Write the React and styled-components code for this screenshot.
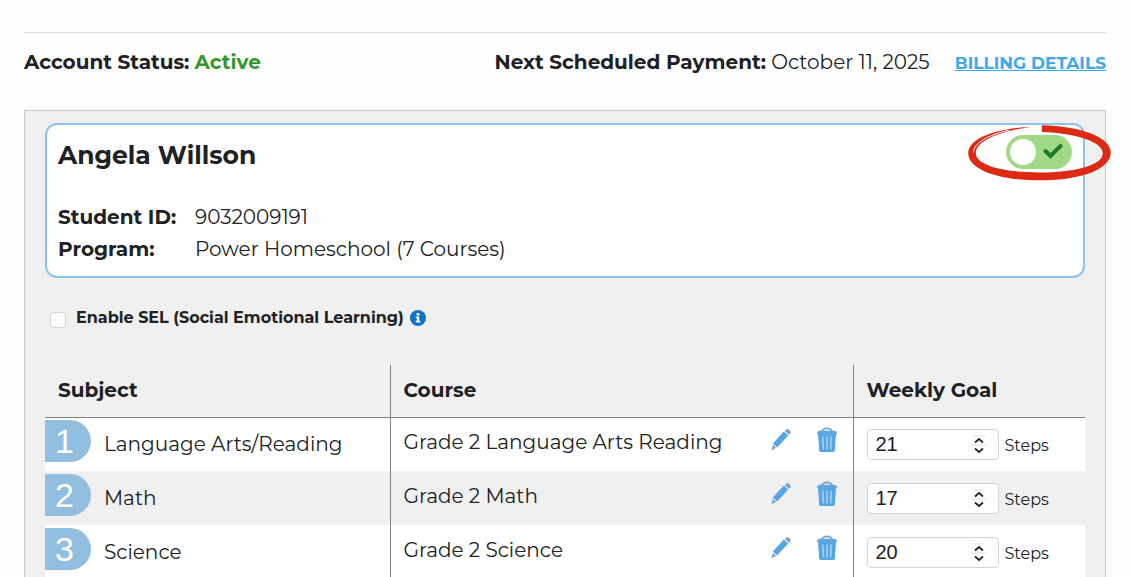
import React, { useState } from "react";
import styled, { createGlobalStyle } from "styled-components";

const courses = [
  { id: 1, subject: "Language Arts/Reading", course: "Grade 2 Language Arts Reading", goal: 21 },
  { id: 2, subject: "Math", course: "Grade 2 Math", goal: 17 },
  { id: 3, subject: "Science", course: "Grade 2 Science", goal: 20 },
];

const PencilIcon = () => (
  <svg width="22" height="24" viewBox="0 0 22 24" aria-hidden="true">
    <path d="M1.5 22.5 2.8 16.4 6.2 19.8Z" fill="#7ea6c4" />
    <path d="M2.8 15.4 13.8 3.6 18.2 7.6 7.2 19.4Z" fill="#52a7e4" />
    <path d="M14.6 3 16.4 1.4Q17.6.6 18.6 1.4L20.4 3Q21.2 4 20.4 5.2L19 6.8Z" fill="#7ea6c4" />
  </svg>
);

const TrashIcon = () => (
  <svg width="22" height="26" viewBox="0 0 22 26" aria-hidden="true">
    <path d="M6 4.4Q7 1.4 11 1.4T16 4.4" fill="none" stroke="#6fa6cf" strokeWidth="1.8" />
    <path d="M1 7Q1 3.8 4 3.8H18Q21 3.8 21 7Z" fill="#64a6d8" />
    <path d="M2 7H20L18.8 23.4Q18.6 25 17.2 25H4.8Q3.4 25 3.2 23.4Z" fill="#52a7e4" />
    <path d="M6.8 9.5 7.4 22.5M11 9.5V22.5M15.2 9.5 14.6 22.5" stroke="#a9d0ec" strokeWidth="1.6" />
  </svg>
);

const InfoIcon = () => (
  <svg width="16" height="16" viewBox="0 0 16 16" aria-hidden="true">
    <circle cx="8" cy="8" r="8" fill="#1273c4" />
    <circle cx="8" cy="4.2" r="1.5" fill="#fff" />
    <path d="M5.8 6.6H9.2V10.8H10.4V12.4H5.8V10.8H7V8.2H5.8Z" fill="#fff" />
  </svg>
);

const CircleMark = () => (
  <Mark viewBox="80 58 436 172" aria-hidden="true">
    <path
      d="M305 62C420 64 513 98 513 144C513 192 430 228 298 228C175 228 83 195 83 146C83 105 155 72 275 66C180 80 106 108 106 146C106 182 190 204 298 204C400 204 489 184 489 146C489 112 410 86 305 82Z"
      fill="#dc2a14"
    />
    <path d="M99 144C99 116 140 92 205 77" fill="none" stroke="#fff" strokeWidth="3" />
  </Mark>
);

export default function App() {
  const [active, setActive] = useState(true);
  const [sel, setSel] = useState(false);

  return (
    <>
      <GlobalStyle />
      <Page>
        <StatusBar>
          <div>
            <strong>Account Status:</strong> <Active>Active</Active>
          </div>
          <Payment>
            <span>
              <strong>Next Scheduled Payment:</strong> October 11, 2025
            </span>
            <BillingLink href="#billing">BILLING DETAILS</BillingLink>
          </Payment>
        </StatusBar>
        <Panel>
          <StudentCard>
            <CardHeader>
              <Name>Angela Willson</Name>
              <Toggle>
                <ToggleInput
                  type="checkbox"
                  aria-label="Student active"
                  checked={active}
                  onChange={(e) => setActive(e.target.checked)}
                />
                <Check viewBox="0 0 20 16" aria-hidden="true">
                  <path
                    d="M2.5 8 7.5 13 17.5 3"
                    fill="none"
                    stroke="#1d7a2c"
                    strokeWidth="4"
                    strokeLinecap="round"
                  />
                </Check>
                <CircleMark />
              </Toggle>
            </CardHeader>
            <Details>
              <dt>Student ID:</dt>
              <dd>9032009191</dd>
              <dt>Program:</dt>
              <dd>Power Homeschool (7 Courses)</dd>
            </Details>
          </StudentCard>
          <SelRow>
            <SelCheckbox
              id="sel"
              type="checkbox"
              checked={sel}
              onChange={(e) => setSel(e.target.checked)}
            />
            <label htmlFor="sel">Enable SEL (Social Emotional Learning)</label>
            <InfoButton type="button" aria-label="About SEL">
              <InfoIcon />
            </InfoButton>
          </SelRow>
          <Table>
            <thead>
              <tr>
                <SubjectHead>Subject</SubjectHead>
                <Head>Course</Head>
                <GoalHead>Weekly Goal</GoalHead>
              </tr>
            </thead>
            <tbody>
              {courses.map(({ id, subject, course, goal }) => (
                <Row key={`course-${id}`}>
                  <Cell>
                    <Subject>
                      <Badge>{id}</Badge>
                      <span>{subject}</span>
                    </Subject>
                  </Cell>
                  <Cell>
                    <Course>
                      <CourseName>{course}</CourseName>
                      <IconButton type="button" aria-label={`Edit ${course}`}>
                        <PencilIcon />
                      </IconButton>
                      <IconButton type="button" aria-label={`Delete ${course}`}>
                        <TrashIcon />
                      </IconButton>
                    </Course>
                  </Cell>
                  <Cell>
                    <Goal>
                      <GoalField>
                        <GoalInput id={`goal-${id}`} type="number" defaultValue={goal} />
                        <Stepper viewBox="0 0 16 20" aria-hidden="true">
                          <path d="M0 10H16M2 1H14" stroke="#ddd" />
                          <path
                            d="M4 7.5 8 4 12 7.5M4 13.5 8 17 12 13.5"
                            fill="none"
                            stroke="#222"
                            strokeWidth="1.7"
                          />
                        </Stepper>
                      </GoalField>
                      <GoalUnit htmlFor={`goal-${id}`}>Steps</GoalUnit>
                    </Goal>
                  </Cell>
                </Row>
              ))}
            </tbody>
          </Table>
        </Panel>
      </Page>
    </>
  );
}

const GlobalStyle = createGlobalStyle`
  * {
    box-sizing: border-box;
  }

  body {
    margin: 0;
    background: #fefefe;
    color: #202124;
    font-family: Montserrat, Inter, sans-serif;
    font-size: 20px;
    line-height: 24px;
  }
`;

const Page = styled.main`
  padding: 32px 24px 0;
`;

const StatusBar = styled.div`
  display: flex;
  justify-content: space-between;
  height: 78px;
  padding-top: 17px;
  border-top: 1px solid #dcdcdc;
  white-space: nowrap;
`;

const Active = styled.strong`
  color: #35972a;
`;

const Payment = styled.div`
  display: flex;
  gap: 25px;
`;

const BillingLink = styled.a`
  color: #3fa9e8;
  font-size: 17px;
  font-weight: 700;
  line-height: 26px;
`;

const Panel = styled.section`
  padding: 12px 20px 0;
  border: 1px solid #c8c9cb;
  background: #f0f0f0;
`;

const StudentCard = styled.div`
  height: 155px;
  padding: 10px 11px 0;
  border: 2px solid #8cc3ec;
  border-radius: 12px;
  background: #fff;
`;

const CardHeader = styled.div`
  display: flex;
  justify-content: space-between;
`;

const Name = styled.h2`
  margin: 4px 0 0;
  font-size: 25px;
  line-height: 32px;
`;

const Toggle = styled.div`
  position: relative;
  width: 66px;
  height: 34px;
`;

const ToggleInput = styled.input`
  appearance: none;
  display: block;
  width: 66px;
  height: 34px;
  margin: 0;
  padding: 4px;
  border-radius: 17px;
  background: #a1da85;

  &::before {
    content: "";
    display: block;
    width: 26px;
    height: 26px;
    border-radius: 50%;
    background: #fff;
  }
`;

const Check = styled.svg`
  position: absolute;
  top: 8px;
  right: 9px;
  width: 20px;
  height: 16px;
  pointer-events: none;
`;

const Mark = styled.svg`
  position: absolute;
  top: -11px;
  left: -39px;
  width: 145px;
  height: 57px;
  pointer-events: none;
`;

const Details = styled.dl`
  display: grid;
  grid-template-columns: 137px 1fr;
  row-gap: 8px;
  margin: 34px 0 0;

  dt {
    font-weight: 700;
  }

  dd {
    margin: 0;
  }
`;

const SelRow = styled.div`
  display: flex;
  align-items: center;
  height: 87px;
  padding: 0 5px 8px;
  font-size: 16px;
  font-weight: 700;
`;

const SelCheckbox = styled.input`
  appearance: none;
  width: 16px;
  height: 16px;
  margin: 5px 10px 0 0;
  border: 1px solid #d4d4d4;
  border-radius: 3px;
  background: #fff;
`;

const InfoButton = styled.button`
  display: flex;
  margin-left: 6px;
  padding: 0;
  border: 0;
  background: none;
`;

const Table = styled.table`
  width: 100%;
  table-layout: fixed;
  border-collapse: collapse;
`;

const Head = styled.th`
  height: 52px;
  padding: 0 13px 2px;
  border-bottom: 1px solid #828282;
  text-align: left;

  & + & {
    border-left: 1px solid #828282;
  }
`;

const SubjectHead = styled(Head)`
  width: 345px;
`;

const GoalHead = styled(Head)`
  width: 232px;
`;

const Row = styled.tr`
  background: #fff;

  &:nth-child(even) {
    background: #f0f0f0;
  }
`;

const Cell = styled.td`
  height: 54px;
  padding: 0;

  & + & {
    padding: 0 13px;
    border-left: 1px solid #828282;
  }
`;

const Subject = styled.div`
  display: flex;
  align-items: center;
  gap: 13px;
`;

const Badge = styled.span`
  width: 46px;
  height: 42px;
  margin-bottom: 6px;
  padding-left: 10px;
  border-radius: 0 21px 21px 0;
  background: #92bfdf;
  color: #fff;
  font: 34px/42px "Liberation Sans", sans-serif;
`;

const Course = styled.div`
  display: flex;
  align-items: center;
  gap: 24px;
  padding: 0 2px 4px 0;
`;

const CourseName = styled.span`
  flex: 1;
`;

const IconButton = styled.button`
  display: flex;
  padding: 0 0 4px;
  border: 0;
  background: none;
`;

const Goal = styled.div`
  display: flex;
  align-items: center;
  gap: 6px;
  font-size: 16px;
`;

const GoalField = styled.div`
  position: relative;
  width: 132px;
`;

const GoalInput = styled.input`
  appearance: textfield;
  display: block;
  width: 100%;
  height: 31px;
  padding: 0 8px;
  border: 1px solid #d2d2d2;
  border-radius: 4px;
  background: #fff;
  color: #202124;
  font: 20px "Liberation Sans", sans-serif;

  &::-webkit-inner-spin-button {
    appearance: none;
  }
`;

const GoalUnit = styled.label`
  padding-top: 3px;
`;

const Stepper = styled.svg`
  position: absolute;
  top: 6px;
  right: 12px;
  width: 16px;
  height: 20px;
  pointer-events: none;
`;
